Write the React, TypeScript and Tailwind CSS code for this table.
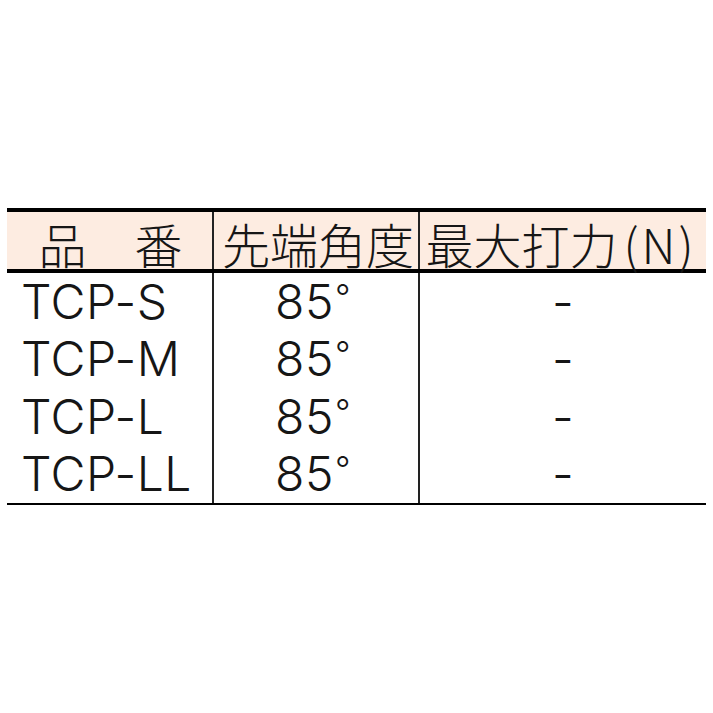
import React from 'react';

const rows = [
  { code: 'TCP-S', angle: '85', force: '-' },
  { code: 'TCP-M', angle: '85', force: '-' },
  { code: 'TCP-L', angle: '85', force: '-' },
  { code: 'TCP-LL', angle: '85', force: '-' },
];

const jp = { fontFamily: '"Noto Sans CJK JP", "Noto Sans", sans-serif' };
const latin = { fontFamily: 'Inter, "Liberation Sans", Arial, sans-serif' };

export default function App() {
  return (
    <div className="w-[713px] h-[713px] bg-white text-[#161616] pt-[208px] px-[7px]">
      {/* Header */}
      <div
        className="grid grid-cols-[207px_206px_1fr] h-[65px] border-t-4 border-b-4 border-black bg-[#fdece1] text-[48px] leading-none font-light"
        style={jp}
      >
        <div className="flex items-center justify-center border-r-2 border-[#222] pl-[2px] pt-[4px]">品　番</div>
        <div className="flex items-center justify-center border-r-2 border-[#222] pl-[4px] pt-[4px]">先端角度</div>
        <div className="flex items-center justify-center pr-[4px] pt-[4px]">
          最大打力<span className="ml-[6px] tracking-[3px]">(N)</span>
        </div>
      </div>

      {/* Body */}
      <div className="grid grid-rows-4 h-[232px] border-b-2 border-black text-[48px] leading-none font-light tracking-[0.5px]" style={latin}>
        {rows.map((r) => (
          <div key={r.code} className="grid grid-cols-[207px_206px_1fr]">
            <div className="flex items-center pl-[14px] border-r-2 border-[#222]">{r.code}</div>
            <div className="flex items-center justify-center border-r-2 border-[#222] pr-[6px]">
              <span>
                {r.angle}
                <span className="text-[34px] align-[10px] ml-[1px]">°</span>
              </span>
            </div>
            <div className="flex items-center justify-center">{r.force}</div>
          </div>
        ))}
      </div>
    </div>
  );
}
